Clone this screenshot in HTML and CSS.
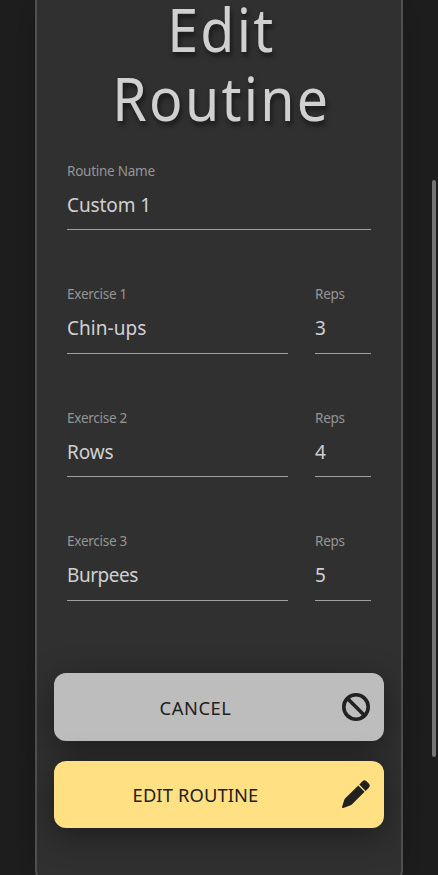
FILE: index.html
```html
<!DOCTYPE html>
<html lang="en">
<head>
<meta charset="utf-8">
<title>Edit Routine</title>
<link rel="stylesheet" href="styles.css">
</head>
<body>
<main class="card">
  <h1 class="title"><span class="title-line">Edit</span> <span class="title-line">Routine</span></h1>
  <form class="form">
    <div class="row">
      <div class="field"><div class="label">Routine Name</div><div class="value">Custom 1</div></div>
    </div>
    <div class="row">
      <div class="field"><div class="label">Exercise 1</div><div class="value loose">Chin-ups</div></div>
      <div class="field reps"><div class="label">Reps</div><div class="value">3</div></div>
    </div>
    <div class="row">
      <div class="field"><div class="label">Exercise 2</div><div class="value">Rows</div></div>
      <div class="field reps"><div class="label">Reps</div><div class="value">4</div></div>
    </div>
    <div class="row">
      <div class="field"><div class="label">Exercise 3</div><div class="value tight">Burpees</div></div>
      <div class="field reps"><div class="label">Reps</div><div class="value">5</div></div>
    </div>
  </form>
  <div class="actions">
    <button class="button cancel" type="button">
      <span class="button-text">CANCEL</span>
      <svg class="icon" viewBox="0 0 28 28"><circle cx="14" cy="14" r="12.2" fill="none" stroke="#212121" stroke-width="3.6"/><path d="M5.5 5.5l17 17" stroke="#212121" stroke-width="3.6"/></svg>
    </button>
    <button class="button submit" type="button">
      <span class="button-text">EDIT ROUTINE</span>
      <svg class="icon" viewBox="0 0 28 28" fill="#212121"><path d="M16.3 5.5l6.3 6.3L10.3 24.1Q9.6 24.8 8.6 25.2L1.2 28Q-.2 28.3.1 26.8L2.3 19.8Q2.6 18.9 3.3 18.2zM17.3 4.5l3.2-3.2Q22.2-.6 24.2 1l2.8 2.8Q28.8 5.8 27 7.5l-3.4 3.4z"/></svg>
    </button>
  </div>
</main>
<div class="scrollbar"></div>
</body>
</html>
```
FILE: styles.css
```css
* { box-sizing: border-box; }
html { height: 100%; overflow: hidden; }
body {
  margin: 0;
  height: 875px;
  overflow: hidden;
  background: #1e1e1e;
  font-family: "Noto Sans", "Open Sans", sans-serif;
  color: #d0d0d0;
}
.card {
  display: flow-root;
  width: 368px;
  height: 884px;
  margin-left: 35px;
  border: 2px solid #505050;
  border-top: 0;
  border-radius: 0 0 14px 14px;
  background: #303030;
  box-shadow: 0 0 40px rgba(0, 0, 0, .2);
}
.title {
  height: 144px;
  margin: -5px 0 0;
  padding-left: 5px;
  font-size: 60px;
  line-height: 68.5px;
  font-weight: 400;
  letter-spacing: 2.4px;
  text-align: center;
  text-shadow: 2px 4px 6px rgba(0, 0, 0, .5);
  transform: scaleX(.925);
}
.title-line { display: block; }
.form { padding: 21px 30px 0; }
.row {
  display: flex;
  gap: 27px;
  height: 123.5px;
}
.field {
  flex: 1;
  height: 70px;
  border-bottom: 1px solid #a0a0a0;
}
.field.reps { flex: 0 0 56px; }
.label {
  height: 22px;
  margin-top: -.1px;
  font-size: 13.5px;
  line-height: 22px;
  letter-spacing: -.25px;
  color: #959595;
}
.value {
  height: 46px;
  font-size: 19px;
  line-height: 46px;
  letter-spacing: -.1px;
}
.value.loose { letter-spacing: .05px; }
.value.tight { letter-spacing: -.45px; }
.actions {
  display: flex;
  flex-direction: column;
  gap: 20px;
  margin: 19px 17px 0;
}
.button {
  display: flex;
  align-items: center;
  width: 330px;
  height: 67.5px;
  padding: 0 14px 0 0;
  border: 0;
  border-radius: 12px;
  color: #212121;
  font: 400 18.3px "Noto Sans", "Open Sans", sans-serif;
  box-shadow: 0 8px 32px rgba(0, 0, 0, .4);
}
.cancel { background: #bdbdbd; }
.submit { background: #ffe082; }
.button-text {
  flex: 1;
  padding: 2px 5px 0 0;
  text-align: center;
}
.cancel .button-text { letter-spacing: .6px; }
.submit .button-text { padding-top: 0; letter-spacing: .15px; }
.icon { width: 28px; height: 28px; overflow: visible; }
.scrollbar {
  position: absolute;
  left: 432px;
  top: 180px;
  width: 4px;
  height: 577px;
  border-radius: 2px;
  background: #757575;
}
```
